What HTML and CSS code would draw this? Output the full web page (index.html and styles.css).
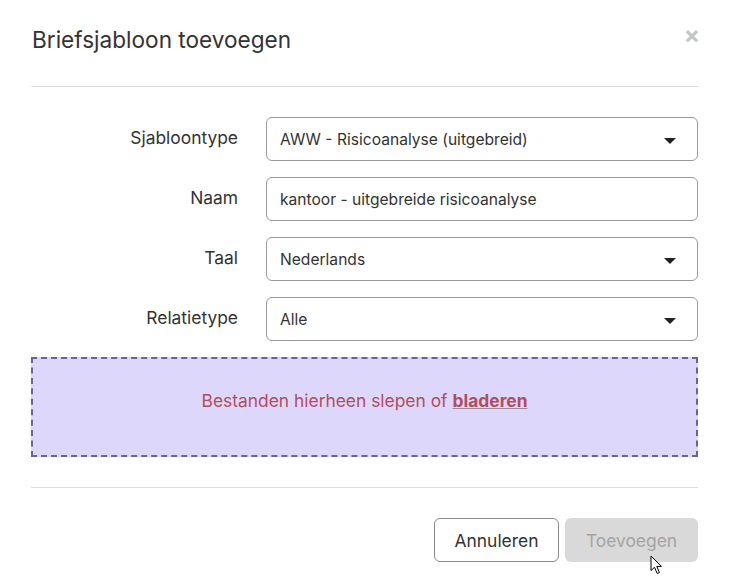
FILE: index.html
```html
<!DOCTYPE html>
<html lang="nl">
<head>
    <meta charset="UTF-8">
    <meta name="viewport" content="width=device-width, initial-scale=1.0">
    <title>Briefsjabloon toevoegen</title>
    <link rel="stylesheet" href="styles.css">
</head>
<body>
    <div class="modal">
        <div class="modal-header">
            <h2 class="modal-title">Briefsjabloon toevoegen</h2>
            <span class="modal-close">&times;</span>
        </div>

        <form class="modal-body" onsubmit="event.preventDefault();" autocomplete="off">
            <div class="form-row">
                <label>Sjabloontype</label>
                <div class="select">AWW - Risicoanalyse (uitgebreid)<span class="caret"></span></div>
            </div>
            <div class="form-row">
                <label>Naam</label>
                <input type="text" value="kantoor - uitgebreide risicoanalyse">
            </div>
            <div class="form-row">
                <label>Taal</label>
                <div class="select">Nederlands<span class="caret"></span></div>
            </div>
            <div class="form-row">
                <label>Relatietype</label>
                <div class="select">Alle<span class="caret"></span></div>
            </div>

            <div class="dropzone">
                Bestanden hierheen slepen of <a>bladeren</a>
            </div>
        </form>

        <div class="modal-footer">
            <button class="btn btn-cancel" type="button">Annuleren</button>
            <span class="btn-wrap">
                <button class="btn btn-submit" type="button" disabled>Toevoegen</button>
                <svg class="pointer" width="13" height="20" viewBox="0 0 13 20">
                    <path d="M1 1 L1 15.5 L4.5 12.3 L7.2 18.5 L9.4 17.5 L6.8 11.4 L11.5 11.4 Z" fill="#fff" stroke="#000" stroke-width="1" stroke-linejoin="round"/>
                </svg>
            </span>
        </div>
    </div>
</body>
</html>
```

FILE: styles.css
```css
body {
    margin: 0;
    background: #fff;
    font-family: Inter, "Noto Sans", sans-serif;
    color: #333;
}

.modal {
    width: 729px;
    height: 588px;
    box-sizing: border-box;
    padding: 0 31px;
}

.modal-header {
    display: flex;
    justify-content: space-between;
    align-items: flex-start;
    height: 87px;
    border-bottom: 1px solid #dedede;
    box-sizing: border-box;
}

.modal-title {
    margin: 26px 0 0 1px;
    font-size: 22.6px;
    font-weight: 400;
    color: #333;
    line-height: 28px;
}

.modal-close {
    margin: 20px -2px 0 0;
    font-size: 24px;
    font-weight: 700;
    color: #c4c4c4;
    line-height: 30px;
}

.modal-body {
    padding-top: 30px;
    display: flex;
    flex-direction: column;
    gap: 16px;
}

.form-row {
    display: grid;
    grid-template-columns: 207px 1fr;
    column-gap: 28px;
    align-items: start;
}

.form-row label {
    text-align: right;
    font-size: 17.4px;
    line-height: 20px;
    padding-top: 11px;
    color: #333;
}

.select,
input[type=text] {
    position: relative;
    height: 44px;
    box-sizing: border-box;
    border: 1px solid #9b9b9b;
    border-radius: 6px;
    padding: 0 13px;
    font-family: inherit;
    font-size: 15.6px;
    color: #333;
    line-height: 43px;
    background: #fff;
    width: 100%;
}

.caret {
    position: absolute;
    right: 21px;
    top: 20px;
    width: 0;
    height: 0;
    border-left: 6px solid transparent;
    border-right: 6px solid transparent;
    border-top: 6px solid #222;
}

.dropzone {
    height: 100px;
    box-sizing: border-box;
    border: 2px dashed #6e5f9f;
    background: #ddd8fb;
    display: flex;
    align-items: center;
    justify-content: center;
    font-size: 17.4px;
    color: #b34c5e;
    padding-bottom: 14px;
}

.dropzone a {
    font-weight: 700;
    text-decoration: underline;
    text-decoration-color: #a08a95;
    margin-left: 5px;
    cursor: pointer;
}

.modal-footer {
    margin-top: 30px;
    border-top: 1px solid #dedede;
    padding-top: 30px;
    display: flex;
    justify-content: flex-end;
    gap: 6px;
}

.btn {
    height: 44px;
    box-sizing: border-box;
    border-radius: 6px;
    font-family: inherit;
    font-size: 17.4px;
    padding: 0;
}

.btn-cancel {
    width: 125px;
    border: 1px solid #8a8a8a;
    background: #fff;
    color: #333;
}

.btn-wrap {
    position: relative;
    display: flex;
}

.btn-submit {
    width: 133px;
    border: none;
    background: #d9d9d9;
    color: #a4a4a4;
}

.pointer {
    position: absolute;
    left: 85px;
    top: 37px;
}
```
